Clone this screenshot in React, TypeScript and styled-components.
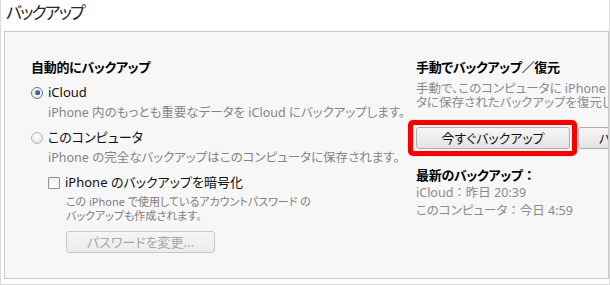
import styled, { createGlobalStyle } from "styled-components";

const GlobalStyle = createGlobalStyle`
  html, body {
    margin: 0;
    padding: 0;
    background: #fff;
  }
  body {
    font-family: "Noto Sans", "Noto Sans CJK JP", sans-serif;
    font-feature-settings: "palt";
    color: #111;
  }
`;

const Window = styled.div`
  width: 610px;
  height: 285px;
  box-sizing: border-box;
  border: 1px solid #dadada;
  border-top: none;
  padding: 0 0 5px 3px;
  display: flex;
  flex-direction: column;
  overflow: hidden;
  background: #fff;
`;

const Title = styled.div`
  height: 31px;
  flex: none;
  font-size: 17px;
  letter-spacing: -2px;
  line-height: 26px;
  color: #2a2a2a;
  padding-left: 2px;
  box-sizing: border-box;
`;

const Panel = styled.div`
  flex: 1;
  display: flex;
  background: #f7f7f7;
  border: 1px solid #c9c9c9;
  padding: 26px 0 0 26px;
  overflow: hidden;
  min-width: 0;
`;

const Column = styled.div<{ $width?: number }>`
  display: flex;
  flex-direction: column;
  align-items: flex-start;
  flex: ${(p) => (p.$width ? `0 0 ${p.$width}px` : "1 0 auto")};
  white-space: nowrap;
`;

const Heading = styled.div<{ $top?: number }>`
  font-size: 13px;
  font-weight: 700;
  line-height: 18px;
  letter-spacing: -0.3px;
  color: #000;
  margin-top: ${(p) => p.$top ?? 0}px;
`;

const Option = styled.label<{ $top: number; $indent?: number }>`
  display: flex;
  align-items: center;
  gap: 5px;
  font-size: 13px;
  line-height: 21px;
  color: #111;
  margin-top: ${(p) => p.$top}px;
  margin-left: ${(p) => p.$indent ?? 0}px;
`;

const Radio = styled.span<{ $checked?: boolean }>`
  position: relative;
  width: 12px;
  height: 12px;
  box-sizing: border-box;
  border-radius: 50%;
  border: 1px solid ${(p) => (p.$checked ? "#6b7d93" : "#b4b4b4")};
  background: radial-gradient(circle at 50% 35%, #ffffff 0%, #eaeaea 70%, #d9d9d9 100%);
  flex: none;

  &::after {
    content: "";
    display: ${(p) => (p.$checked ? "block" : "none")};
    position: absolute;
    left: 2.5px;
    top: 2.5px;
    width: 5px;
    height: 5px;
    border-radius: 50%;
    background: radial-gradient(circle at 40% 35%, #5d86c4 0%, #1d3f78 75%);
  }
`;

const Checkbox = styled.span`
  width: 12px;
  height: 12px;
  box-sizing: border-box;
  border: 1px solid #919191;
  border-radius: 1px;
  background: linear-gradient(#f0f0f0, #ffffff);
  flex: none;
`;

const Desc = styled.div<{ $top?: number; $indent?: number }>`
  font-size: 12.5px;
  line-height: 19px;
  color: #858585;
  margin-top: ${(p) => p.$top ?? 0}px;
  margin-left: ${(p) => p.$indent ?? 0}px;
`;

const Note = styled.div`
  font-size: 11px;
  line-height: 14px;
  color: #7d7d7d;
  margin: 2px 0 0 35px;
  white-space: pre-line;
`;

const Button = styled.button<{ $width?: number }>`
  font-family: inherit;
  font-feature-settings: "palt";
  font-size: 13px;
  height: 22px;
  width: ${(p) => (p.$width ? `${p.$width}px` : "auto")};
  padding: 0 20px;
  border: 1px solid #adadad;
  border-radius: 3px;
  background: linear-gradient(#f6f6f6, #e3e3e3);
  color: #111;
  line-height: 20px;
  flex: none;
  text-align: center;

  &:disabled {
    border-color: #c8c8c8;
    background: linear-gradient(#f6f6f6, #ececec);
    color: #a6a6a6;
  }
`;

const ButtonRow = styled.div<{ $top: number; $indent?: number }>`
  display: flex;
  gap: 8px;
  margin-top: ${(p) => p.$top}px;
  margin-left: ${(p) => p.$indent ?? 0}px;
`;

const Highlight = styled.div`
  position: relative;
  display: flex;
`;

const RedFrame = styled.div`
  position: absolute;
  top: -7px;
  bottom: -7px;
  left: -8px;
  right: -7px;
  border: 5px solid #f60000;
  border-radius: 5px;
  box-shadow: 0 0 1px rgba(255, 0, 0, 0.6), inset 0 0 1px rgba(255, 0, 0, 0.6);
  pointer-events: none;
`;

const Info = styled.div<{ $top?: number; $lh?: number }>`
  font-size: 12.5px;
  line-height: ${(p) => p.$lh ?? 18}px;
  color: #8a8a8a;
  margin-top: ${(p) => p.$top ?? 0}px;
`;

const Colon = styled.span`
  font-feature-settings: normal;
`;

export default function App() {
  return (
    <>
      <GlobalStyle />
      <Window>
        <Title>バックアップ</Title>
        <Panel>
          <Column $width={385}>
            <Heading>自動的にバックアップ</Heading>
            <Option $top={6}>
              <Radio $checked />
              iCloud
            </Option>
            <Desc $indent={17}>
              iPhone 内のもっとも重要なデータを iCloud にバックアップします。
            </Desc>
            <Option $top={5}>
              <Radio />
              このコンピュータ
            </Option>
            <Desc $indent={17}>
              iPhone の完全なバックアップはこのコンピュータに保存されます。
            </Desc>
            <Option $top={5} $indent={17}>
              <Checkbox />
              iPhone のバックアップを暗号化
            </Option>
            <Note>
              {"この iPhone で使用しているアカウントパスワード の\nバックアップも作成されます。"}
            </Note>
            <ButtonRow $top={8} $indent={35}>
              <Button $width={149} disabled>
                パスワードを変更...
              </Button>
            </ButtonRow>
          </Column>
          <Column>
            <Heading>手動でバックアップ／復元</Heading>
            <Info $top={6} $lh={14}>
              手動で、このコンピュータに iPhone をバックアップしたり、このコンピュー
            </Info>
            <Info $lh={14}>タに保存されたバックアップを復元したりします。</Info>
            <ButtonRow $top={17}>
              <Highlight>
                <Button $width={154}>今すぐバックアップ</Button>
                <RedFrame />
              </Highlight>
              <Button>バックアップを復元...</Button>
            </ButtonRow>
            <Heading $top={17}>
              最新のバックアップ<Colon>：</Colon>
            </Heading>
            <Info>
              iCloud<Colon>：</Colon>昨日 20:39
            </Info>
            <Info>
              このコンピュータ<Colon>：</Colon>今日 4:59
            </Info>
          </Column>
        </Panel>
      </Window>
    </>
  );
}
